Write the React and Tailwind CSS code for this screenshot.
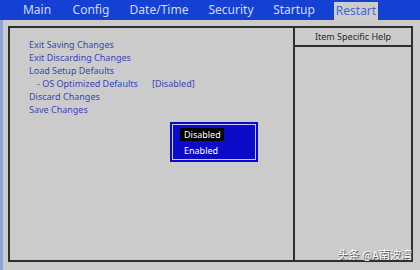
export default function App() {
  const tabs = [
    { label: 'Main', w: 'w-[50px]' },
    { label: 'Config', w: 'w-[58px]' },
    { label: 'Date/Time', w: 'w-[78px]' },
    { label: 'Security', w: 'w-[66px]' },
    { label: 'Startup', w: 'w-[60px]' },
  ]
  const items = [
    'Exit Saving Changes',
    'Exit Discarding Changes',
    'Load Setup Defaults',
    null,
    'Discard Changes',
    'Save Changes',
  ]

  return (
    <div
      className="relative w-[420px] h-[270px] bg-[#cbcbcb] overflow-hidden"
      style={{ fontFamily: '"Noto Sans", "Open Sans", sans-serif' }}
    >
      {/* tab bar */}
      <div className="flex items-end h-[20px] bg-[#1441d4] pl-[12px]">
        {tabs.map(t => (
          <div key={t.label} className={`${t.w} h-[20px] flex items-center justify-center text-[12px] text-[#cfdaff]`}>
            {t.label}
          </div>
        ))}
        <div className="ml-[10px] w-[44px] h-[18px] bg-[#cdcdcd] flex items-center justify-center text-[12px] text-[#4866d6]">
          Restart
        </div>
      </div>

      <div className="flex h-[250px] border-l-[3px] border-[#8fa6dc]">
        <div className="mt-[6px] ml-[5px] w-[405px] h-[236px] border-2 border-[#2f2f2f] flex">
          <div className="w-[283px] pt-[10px] pl-[19px] flex flex-col text-[9px] text-[#3448b8] leading-[13px]">
            {items.map((it, i) =>
              it ? (
                <div key={i}>{it}</div>
              ) : (
                <div key={i} className="flex">
                  <span className="w-[123px] pl-[8px]">- OS Optimized Defaults</span>
                  <span>[Disabled]</span>
                </div>
              )
            )}
          </div>
          <div className="flex-1 border-l-2 border-[#2f2f2f] flex flex-col">
            <div className="h-[19px] border-b-2 border-[#2f2f2f] flex items-center justify-center text-[9px] text-[#2a2a2a]">
              Item Specific Help
            </div>
          </div>
        </div>
      </div>

      {/* popup */}
      <div className="absolute left-[170px] top-[122px] w-[88px] h-[40px] bg-[#0c0cc8] p-[2px]">
        <div className="w-full h-full border border-[#c8c8ff] pt-[3px] pl-[7px] flex flex-col gap-[3px] text-[9px]">
          <div className="w-[44px] h-[13px] bg-black text-white pl-[4px] leading-[13px]">Disabled</div>
          <div className="text-white pl-[4px] leading-[13px]">Enabled</div>
        </div>
      </div>

      {/* watermark */}
      <div
        className="absolute right-[8px] bottom-[8px] text-[11px] text-white"
        style={{ textShadow: '1px 1px 1px #333', fontFamily: '"Noto Sans CJK SC", sans-serif' }}
      >
        头条 @A南波湾
      </div>
    </div>
  )
}
